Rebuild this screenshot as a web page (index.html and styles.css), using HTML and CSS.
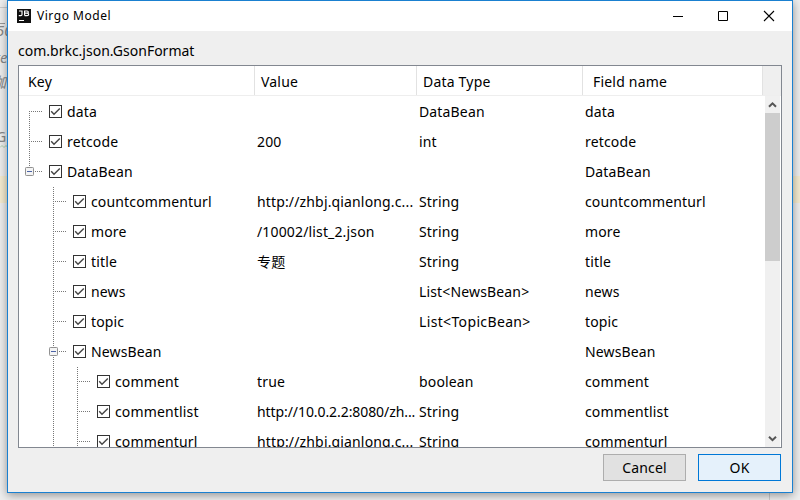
FILE: index.html
```html
<!DOCTYPE html>
<html lang="en">
<head>
<meta charset="utf-8">
<title>Virgo Model</title>
<link rel="stylesheet" href="styles.css">
</head>
<body>
<svg class="defs" width="0" height="0">
  <symbol id="check" viewBox="0 0 13 13"><rect x=".5" y=".5" width="12" height="12" fill="#fff" stroke="#333"/><path d="M2.2 6.3 5 9.2 10.8 3.4" fill="none" stroke="#444" stroke-width="1.4"/></symbol>
  <symbol id="minus" viewBox="0 0 9 9"><rect x=".5" y=".5" width="8" height="8" rx=".8" fill="#f4f4f4" stroke="#919191"/><path d="M2 4.5h5" stroke="#4b63a7"/></symbol>
</svg>
<div class="editor"><i class="line1"></i><i class="line2"></i><span class="code c1">50</span><span class="code c2">te</span><span class="code c3">伽</span><span class="code c4">G</span><svg class="squiggle" width="8" height="3" viewBox="0 0 8 3"><path d="M0 2.5 2 .5l2 2 2-2 2 2" fill="none" stroke="#a9cfa9"/></svg><i class="caret-row"></i><i class="margin"></i></div>
<main class="dialog">
  <header class="titlebar">
    <svg class="logo" width="14" height="14" viewBox="0 0 14 14"><rect width="14" height="14" fill="#111"/><path d="M2 2h3v3.4q0 1.2-1.2 1.2H1.8M7.6 6.6V2h2.5q1.2 0 1.2 1.1t-1.2 1.1H7.6m2.5 0q1.5 0 1.5 1.2t-1.5 1.2H7.6" fill="none" stroke="#fff" stroke-width="1.2"/><path d="M2 11.5h5" stroke="#fff"/></svg>
    <span class="title">Virgo Model</span>
    <svg class="controls" width="104" height="12" viewBox="0 0 104 12"><path d="M0 6.5h10M45.5 1.5h9v9h-9z" fill="none" stroke="#000"/><path d="M91 1l10 10M101 1 91 11" stroke="#000" stroke-width="1.1"/></svg>
  </header>
  <div class="classname"><span>com.brkc.json.GsonFormat</span></div>
  <section class="table">
    <div class="head"><div>Key</div><div>Value</div><div>Data Type</div><div>Field name</div></div>
    <div class="body">
      <div class="rows" id="rows"></div>
      <div class="scrollbar">
        <svg width="15" height="17" viewBox="0 0 15 17"><path d="M4 10.8 7.5 7.3 11 10.8" fill="none" stroke="#555" stroke-width="2"/></svg>
        <div class="track"><div class="thumb"></div></div>
        <svg width="15" height="17" viewBox="0 0 15 17"><path d="M4 6.7 7.5 10.2 11 6.7" fill="none" stroke="#555" stroke-width="2"/></svg>
      </div>
    </div>
  </section>
  <footer class="actions"><button>Cancel</button><button class="primary">OK</button></footer>
</main>
<script src="tree.js"></script>
</body>
</html>
```
FILE: styles.css
```css
* { box-sizing: border-box; }
body { margin: 0; width: 800px; height: 500px; overflow: hidden; position: relative; background: #eee; color: #000; font: 14px/20px "Noto Sans", "Noto Sans CJK SC", sans-serif; }
.defs { position: absolute; }
svg { display: block; flex: none; }
.editor { position: absolute; inset: 0; }
.editor > * { position: absolute; }
.line1 { left: 0; top: 7px; width: 8px; height: 1px; background: #ccc; }
.line2 { left: 0; top: 23px; width: 5px; height: 1px; background: #999; }
.caret-row { left: 0; top: 176px; width: 800px; height: 27px; background: #f5ecd0; }
.margin { left: 769px; top: 490px; width: 1px; height: 10px; background: #ccc; }
.code { color: #888; font-style: italic; font-size: 15px; }
.c1 { left: -4px; top: 20px; }
.c2 { left: -5px; top: 47px; }
.c3 { left: -9px; top: 72px; }
.c4 { left: -4px; top: 127px; font-style: normal; font-size: 14px; }
.squiggle { left: 0; top: 145px; }
.dialog { position: relative; width: 786px; height: 493px; margin-left: 7px; border: 1px solid #1a80d0; background: #efefef; box-shadow: 0 2px 9px rgba(0,0,0,.4); display: flex; flex-direction: column; }
.titlebar { height: 30px; flex: none; background: #fff; display: flex; align-items: center; padding: 0 15px 0 9px; }
.title { font-size: 12px; margin-left: 6px; letter-spacing: .53px; flex: 1; }
.classname { height: 34px; padding: 10px 0 0 10px; flex: none; }
.table { margin: 0 10px; height: 383px; flex: none; border: 1px solid #828790; background: #fff; display: flex; flex-direction: column; overflow: hidden; }
.head { display: grid; grid-template-columns: 236px 162px 166px 180px 1fr; grid-template-rows: 29px; height: 30px; flex: none; background: #efefef; border-bottom: 1px solid #eee; line-height: 31px; letter-spacing: .2px; }
.head div { background: #fff; border-right: 1px solid #e2e2e2; padding-left: 6px; }
.head div:first-child { padding-left: 9px; }
.head div:nth-child(4) { padding-left: 10px; }
.body { display: flex; height: 351px; overflow: hidden; }
.rows { width: 746px; padding-top: 1px; flex: none; letter-spacing: .15px; }
.row { display: grid; grid-template-columns: 238px 162px 166px 180px; height: 30px; line-height: 30px; white-space: nowrap; }
.tight { letter-spacing: -.08px; }
.wide { letter-spacing: .35px; }
.key { display: flex; padding-left: 10px; }
.space, .guide { width: 24px; height: 30px; flex: none; }
.guide, .stem { background: repeating-linear-gradient(to bottom, #777 0 1px, transparent 1px 2px) 0 0 / 1px 100% no-repeat; }
.branch { width: 20px; flex: none; display: grid; grid-template: 14px 1px 15px / 1px 13px 6px; position: relative; }
.stem { grid-area: 1 / 1 / 4 / 2; }
.first .stem { grid-row: 2 / 4; }
.last .stem { grid-row: 1 / 2; }
.arm { grid-area: 2 / 2; background: repeating-linear-gradient(to right, transparent 0 1px, #777 1px 2px); }
.expander { position: absolute; left: -4px; top: 10px; }
.box { margin: 8px 5px 0 0; }
.scrollbar { width: 15px; background: #f0f0f0; display: flex; flex-direction: column; }
.track { flex: 1; }
.thumb { height: 148px; background: #cdcdcd; }
.actions { display: flex; justify-content: flex-end; gap: 12px; padding: 6px 11px 0 0; }
button { width: 83px; height: 27px; padding: 0; border: 1px solid #adadad; background: #e1e1e1; color: #000; font: inherit; letter-spacing: .15px; }
.primary { border-color: #0078d7; background: #e5f1fb; }
```
FILE: tree.js
```js
const data = [
  [0, 'data', '', 'DataBean', 'first'],
  [0, 'retcode', '200', 'int'],
  [0, 'DataBean', '', '', 'last open'],
  [1, 'countcommenturl', 'http://zhbj.qianlong.c...', 'String'],
  [1, 'more', '/10002/list_2.json', 'String'],
  [1, 'title', '专题', 'String'],
  [1, 'news', '', 'List<NewsBean>'],
  [1, 'topic', '', 'List<TopicBean>'],
  [1, 'NewsBean', '', '', 'open'],
  [2, 'comment', 'true', 'boolean'],
  [2, 'commentlist', 'http://10.0.2.2:8080/zh...', 'String'],
  [2, 'commenturl', 'http://zhbj.qianlong.c...', 'String']
];
const esc = s => s.replace(/</g, '&lt;');
const indent = ['', '<i class="space"></i>', '<i class="space"></i><i class="guide"></i>'];
document.getElementById('rows').innerHTML = data.map(([depth, key, value, type, state = '']) => `
  <div class="row ${state}">
    <div class="key">${indent[depth]}<i class="branch"><i class="stem"></i><i class="arm"></i>${state.includes('open') ? '<svg class="expander" width="9" height="9"><use href="#minus"/></svg>' : ''}</i><svg class="box" width="13" height="13"><use href="#check"/></svg><span>${key}</span></div>
    <div><span class="${value.includes('8080') ? 'tight' : ''}">${value}</span></div><div><span class="${type.includes('Topic') ? 'wide' : ''}">${esc(type)}</span></div><div><span>${key}</span></div>
  </div>`).join('');
```
